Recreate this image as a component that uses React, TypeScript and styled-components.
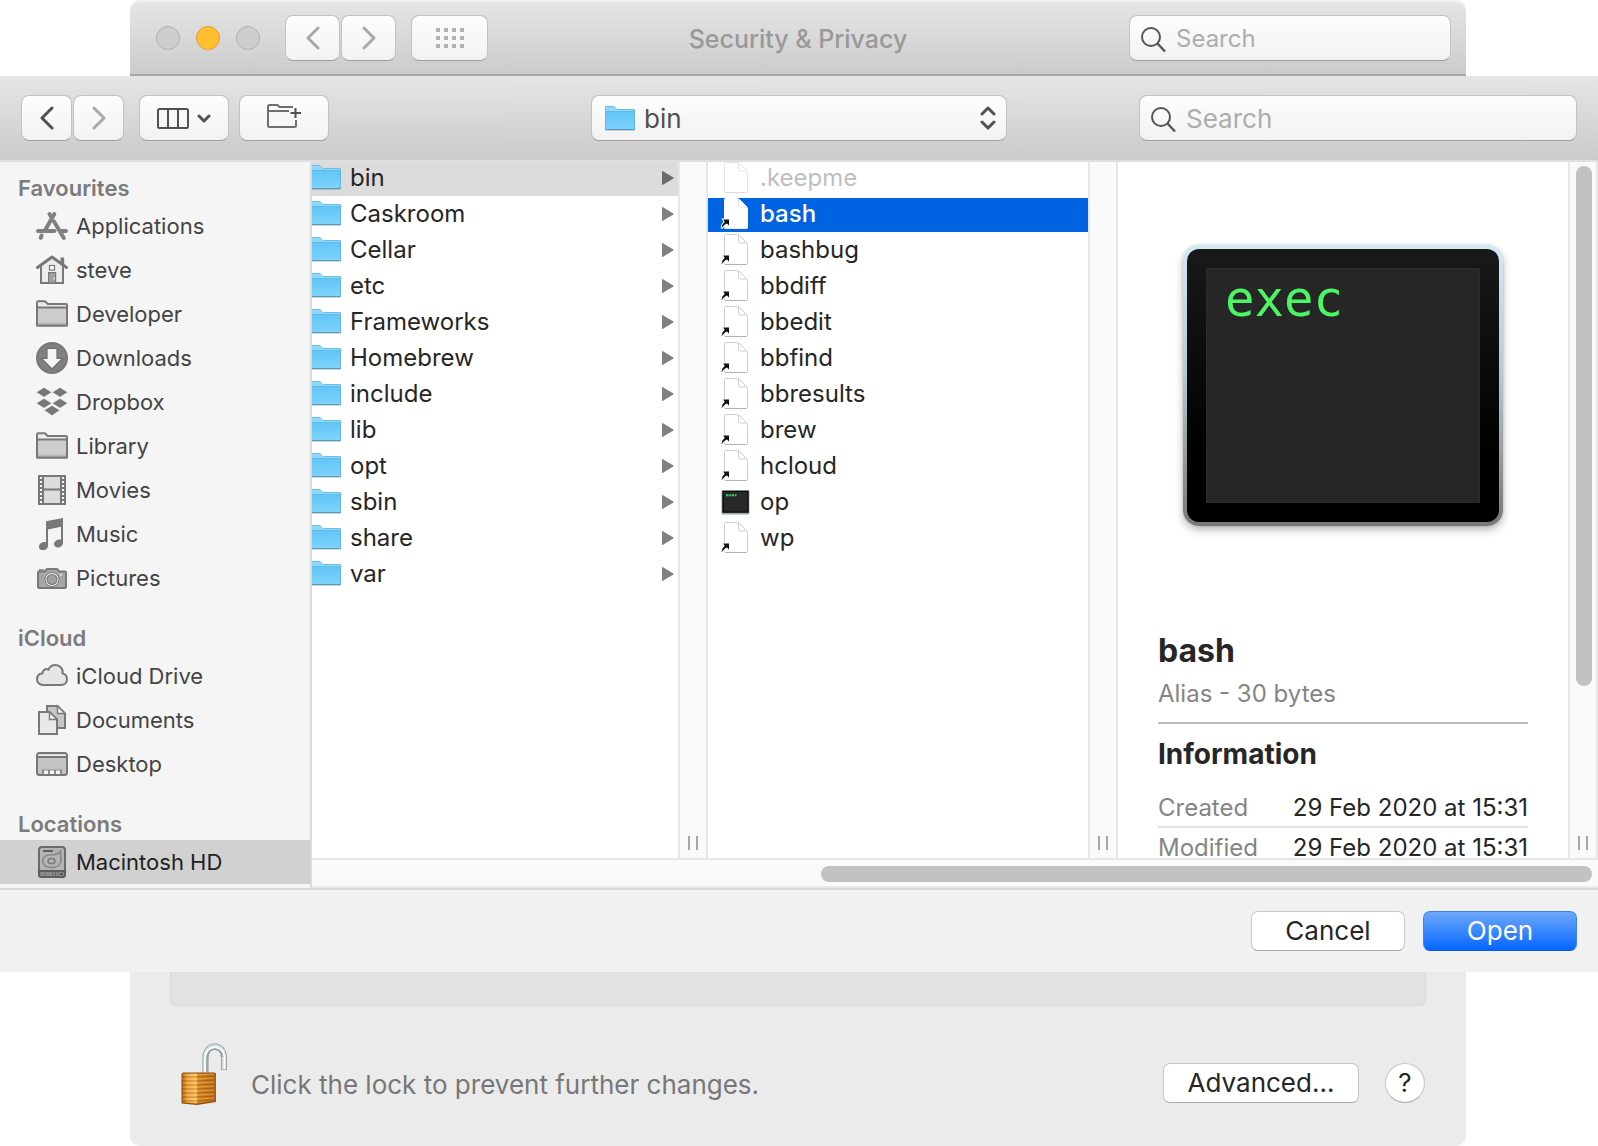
import React from "react";
import styled, { createGlobalStyle, css } from "styled-components";

const GlobalStyle = createGlobalStyle`
  *, *::before, *::after { box-sizing: border-box; }
  body {
    margin: 0;
    background: #fff;
    color: #262626;
    font-family: Inter, "Liberation Sans", sans-serif;
    font-size: 24px;
  }
  button, input, select { font: inherit; color: inherit; margin: 0; }
  button { cursor: default; }
  ul, dl, dd, h1, h2, h3, p { margin: 0; padding: 0; }
  ul { list-style: none; }
  svg { display: block; flex: none; }
`;

/* ---------- page and windows ---------- */

const Page = styled.main`
  display: flex;
  flex-direction: column;
  min-height: 100vh;
`;

const TitleBar = styled.header`
  display: grid;
  grid-template-columns: 1fr auto 1fr;
  align-items: center;
  height: 76px;
  margin: 0 132px 0 130px;
  padding: 2px 15px 0;
  border-bottom: 2px solid #a6a6a6;
  border-radius: 10px 10px 0 0;
  background: linear-gradient(#e6e6e6, #cbcbcb);
  box-shadow: inset 0 2px 0 #f1f1f1;
`;

const WindowTitle = styled.h1`
  padding-top: 2px;
  font-size: 25px;
  line-height: 32px;
  font-weight: 500;
  color: #999;
`;

const Sheet = styled.section`
  display: flex;
  flex-direction: column;
`;

const Toolbar = styled.div`
  display: grid;
  grid-template-columns: 1fr 416px 1fr;
  align-items: center;
  height: 84px;
  padding: 0 21px;
  background: linear-gradient(#e5e5e5, #cbcbcb);
`;

const WindowBody = styled.section`
  display: flex;
  flex-direction: column;
  flex: 1;
  margin: 0 132px 0 130px;
  border-radius: 0 0 10px 10px;
  background: #ebebeb;
`;

const GroupBox = styled.div`
  height: 34px;
  margin: 0 40px;
  border: 1px solid #dadada;
  border-top: 0;
  border-radius: 0 0 6px 6px;
  background: #e2e2e2;
`;

const LockRow = styled.div`
  display: flex;
  align-items: center;
  flex: 1;
  padding: 14px 41px 0 51px;
`;

const LockToggle = styled.button`
  align-self: flex-start;
  margin: 23px 22px 0 0;
  padding: 0;
  border: 0;
  background: none;
`;

const LockNote = styled.p`
  flex: 1;
  padding-top: 4px;
  font-size: 26px;
  line-height: 32px;
  color: #777;
`;

/* ---------- controls ---------- */

const Cluster = styled.div<{ $gap: number }>`
  display: flex;
  align-items: center;
  gap: ${(p) => p.$gap}px;
`;

const raised = css`
  height: 46px;
  border: 1px solid #c2c2c2;
  border-bottom-color: #9f9f9f;
  border-radius: 8px;
  background: linear-gradient(#fdfdfd, #f2f2f2);
`;

const ToolButton = styled.button<{ $width: number }>`
  ${raised}
  display: flex;
  align-items: center;
  justify-content: center;
  gap: 8px;
  width: ${(p) => p.$width}px;
  padding: 0;
`;

const Lights = styled.div`
  display: flex;
  gap: 16px;
  margin: 0 10px 0 11px;
`;

const Light = styled.button<{ $on?: boolean }>`
  width: 24px;
  height: 24px;
  padding: 0;
  border: 1px solid ${(p) => (p.$on ? "#e3993a" : "#b2b2b2")};
  border-radius: 50%;
  background: ${(p) => (p.$on ? "#ffbf2f" : "#cdcdcd")};
`;

const SearchBox = styled.label<{ $width: number }>`
  position: relative;
  justify-self: end;
  width: ${(p) => p.$width}px;
  max-width: 100%;

  svg {
    position: absolute;
    left: 12px;
    top: 12px;
  }
`;

const SearchInput = styled.input<{ $size: number }>`
  ${raised}
  display: block;
  width: 100%;
  padding: 0 12px 0 46px;
  font-size: ${(p) => p.$size}px;

  &::placeholder {
    color: #adadad;
    opacity: 1;
  }
`;

const PathPicker = styled.label`
  position: relative;
  display: block;

  svg {
    position: absolute;
    top: 11px;
    pointer-events: none;
  }
  svg:first-child { left: 14px; }
  svg:last-child { right: 11px; }
`;

const PathSelect = styled.select`
  ${raised}
  appearance: none;
  display: block;
  width: 100%;
  padding: 0 40px 0 52px;
  font-size: 26px;
  color: #505050;
`;

const PushButton = styled.button<{ $primary?: boolean; $width: number }>`
  width: ${(p) => p.$width}px;
  height: 40px;
  padding: 0;
  border: 1px solid ${(p) => (p.$primary ? "#3b84f2" : "#c6c6c6")};
  border-bottom-color: ${(p) => (p.$primary ? "#0a5be0" : "#ababab")};
  border-radius: 7px;
  background: ${(p) => (p.$primary ? "linear-gradient(#6fa9fb, #0566ff)" : "#fff")};
  color: ${(p) => (p.$primary ? "#fff" : "#262626")};
  font-size: 26px;
  line-height: 36px;
`;

const HelpButton = styled.button`
  width: 40px;
  height: 40px;
  margin-left: 26px;
  padding: 0;
  border: 1px solid #c6c6c6;
  border-bottom-color: #ababab;
  border-radius: 50%;
  background: #fff;
  font-size: 26px;
  line-height: 36px;
`;

/* ---------- browser ---------- */

const Browser = styled.div`
  display: flex;
  border-top: 2px solid #dfdfdf;
  border-bottom: 2px solid #d8d8d8;
`;

const Sidebar = styled.nav`
  width: 312px;
  flex: none;
  padding: 14px 0 4px;
  border-right: 2px solid #dbdbdb;
  background: #f5f5f5;
`;

const SideGroup = styled.section`
  & + & { margin-top: 26px; }
`;

const SideHeading = styled.h2`
  padding-left: 18px;
  font-size: 22px;
  line-height: 24px;
  height: 28px;
  font-weight: 600;
  color: #7b7b7b;
`;

const SideItem = styled.button<{ $selected?: boolean }>`
  display: flex;
  align-items: center;
  gap: 8px;
  width: 100%;
  height: 44px;
  padding: 0 0 0 36px;
  border: 0;
  background: ${(p) => (p.$selected ? "#d1d1d1" : "transparent")};
  color: ${(p) => (p.$selected ? "#222" : "#444")};
  font-size: 22px;
`;

const BrowserMain = styled.div`
  display: flex;
  flex-direction: column;
  flex: 1;
  min-width: 0;
`;

const Columns = styled.div`
  display: flex;
  flex: 1 1 0;
  min-height: 0;
  overflow: hidden;
  contain: size;
`;

const FileList = styled.ul<{ $grow: number }>`
  display: flex;
  flex-direction: column;
  gap: 2px;
  flex: ${(p) => p.$grow} 1 0;
  min-width: 0;
  overflow: hidden;
`;

const FileRow = styled.button<{ $tone?: "parent" | "active"; $dim?: boolean; $inset: number }>`
  display: flex;
  align-items: center;
  gap: 9px;
  width: 100%;
  height: 34px;
  padding: 0 4px 3px ${(p) => p.$inset}px;
  border: 0;
  text-align: left;
  background: ${(p) => (p.$tone === "active" ? "#0063e1" : p.$tone === "parent" ? "#dcdcdc" : "transparent")};
  color: ${(p) => (p.$tone === "active" ? "#fff" : p.$dim ? "#bfbfbf" : "#262626")};
  font-weight: ${(p) => (p.$tone === "active" ? 500 : 400)};
`;

const FolderSlot = styled.span`
  width: 29px;
  overflow: hidden;
  display: flex;
  justify-content: flex-end;
`;

const FileSlot = styled.span`
  width: 31px;
`;

const FileName = styled.span`
  flex: 1;
`;

const Gutter = styled.div`
  display: flex;
  flex-direction: column;
  align-items: center;
  width: 30px;
  flex: none;
  padding: 4px 0 8px;
  border: 2px solid #e6e6e6;
  border-width: 0 2px;
  background: #fafafa;
`;

const Grip = styled.span`
  width: 10px;
  height: 14px;
  margin-top: auto;
  border: 2px solid #a6a6a6;
  border-width: 0 2px;
`;

const VerticalThumb = styled.span`
  width: 16px;
  height: 76%;
  border-radius: 8px;
  background: #c2c2c2;
  margin-left: 2px;
`;

const HorizontalTrack = styled.div`
  display: flex;
  justify-content: flex-end;
  align-items: center;
  height: 30px;
  padding: 2px 6px 0 0;
  border-top: 2px solid #e6e6e6;
  border-bottom: 2px solid #e9e9e9;
  background: #fafafa;
`;

const HorizontalThumb = styled.span`
  width: calc(60% + 3px);
  height: 16px;
  border-radius: 8px;
  background: #c2c2c2;
`;

const Footer = styled.footer`
  display: flex;
  justify-content: flex-end;
  gap: 18px;
  padding: 21px;
  background: #f1f1f1;
`;

/* ---------- preview ---------- */

const Preview = styled.article`
  flex: 370 1 80px;
  min-width: 0;
  padding: 83px 40px 0;
  overflow: hidden;
`;

const ExecFrame = styled.div`
  width: 320px;
  height: 281px;
  margin: 0 auto 105px;
  padding: 4px;
  border-radius: 16px;
  background: linear-gradient(#d3e9f3, #b9c9d0 45%, #777);
  box-shadow: 0 0 2px rgba(0, 0, 0, 0.2), 0 4px 8px rgba(0, 0, 0, 0.28);
`;

const ExecBezel = styled.div`
  height: 100%;
  padding: 19px;
  border-radius: 12px;
  background: linear-gradient(#191919, #000 75%);
`;

const ExecScreen = styled.div`
  height: 100%;
  padding: 3px 18px;
  border: 1px solid #2c2c2c;
  background: #262626;
  color: #4cf566;
  font-family: "DejaVu Sans Mono", monospace;
  font-size: 49px;
  line-height: 56px;
`;

const PreviewTitle = styled.h2`
  font-size: 32px;
  line-height: 40px;
  font-weight: 700;
`;

const PreviewKind = styled.p`
  margin-top: 7px;
  padding-bottom: 12px;
  line-height: 32px;
  border-bottom: 2px solid #bcbcbc;
  color: #858585;
`;

const PreviewHeading = styled.h3`
  margin: 12px 0 16px;
  font-size: 28px;
  line-height: 36px;
  font-weight: 700;
`;

const Fact = styled.div`
  display: flex;
  justify-content: space-between;
  padding-top: 2px;
  line-height: 36px;
  border-bottom: 2px solid #e2e2e2;
  white-space: nowrap;

  dt { color: #858585; }
`;

/* ---------- icons ---------- */

const INK = "#787878";

const Chevron = ({ flip, color }: { flip?: boolean; color: string }) => (
  <svg width="14" height="24" viewBox="0 0 14 24" fill="none" stroke={color} strokeWidth="3" strokeLinecap="round" strokeLinejoin="round">
    <path d={flip ? "M2 2L12 12L2 22" : "M12 2L2 12L12 22"} />
  </svg>
);

const GridIcon = () => (
  <svg width="28" height="20" viewBox="0 0 28 20" fill="#b1b1b1">
    {[0, 8, 16].map((y) => [0, 8, 16, 24].map((x) => <rect key={`${x}-${y}`} x={x} y={y} width="4" height="4" />))}
  </svg>
);

const Magnifier = () => (
  <svg width="26" height="26" viewBox="0 0 26 26" fill="none" stroke="#555" strokeWidth="2">
    <circle cx="10" cy="10" r="9" />
    <path d="M16.5 16.5L24 24.5" strokeWidth="2.4" />
  </svg>
);

const ColumnsIcon = () => (
  <svg width="32" height="21" viewBox="0 0 32 21" fill="none" stroke="#505050" strokeWidth="2">
    <rect x="1" y="1" width="30" height="19" rx="1.5" />
    <path d="M11 1V20M21 1V20" />
  </svg>
);

const DownChevron = () => (
  <svg width="14" height="9" viewBox="0 0 14 9" fill="none" stroke="#505050" strokeWidth="3" strokeLinecap="round" strokeLinejoin="round">
    <path d="M2 2L7 7L12 2" />
  </svg>
);

const NewFolderIcon = () => (
  <svg width="34" height="28" viewBox="0 0 34 28" fill="none" stroke="#6f6f6f" strokeWidth="2">
    <path d="M26 3H12.5L10.5 1H2.5Q1 1 1 2.5V21.5Q1 23 2.5 23H27.5Q29 23 29 21.5V16M1 7H22" />
    <path d="M28.5 4V14M23.5 9H34" stroke="#505050" />
  </svg>
);

const UpDownIcon = () => (
  <svg width="16" height="24" viewBox="0 0 16 24" fill="none" stroke="#505050" strokeWidth="3" strokeLinecap="round" strokeLinejoin="round">
    <path d="M2 8L8 2L14 8M2 16L8 22L14 16" />
  </svg>
);

const BlueFolder = () => (
  <svg width="30" height="25" viewBox="0 0 30 25">
    <defs>
      <linearGradient id="folderFace" x1="0" y1="0" x2="0" y2="1">
        <stop offset="0" stopColor="#62c6f8" />
        <stop offset="1" stopColor="#7dd3fb" />
      </linearGradient>
    </defs>
    <path d="M0.5 24.5H29.5" stroke="#000" strokeOpacity=".16" />
    <path d="M.5 23V1Q.5 .5 1 .5H8.5Q9.5 .5 10 1.5L11 2.8Q11.5 3.5 12.5 3.5H29Q29.5 3.5 29.5 4V23Z" fill="#8fd9fd" stroke="#69bde6" />
    <path d="M.5 5.5H29.5V23.5H.5Z" fill="url(#folderFace)" stroke="#5fb4de" strokeWidth=".8" />
    <path d="M.5 23.5H29.5" stroke="#4f9cc4" />
  </svg>
);

const DocIcon = ({ alias, dim, lit }: { alias?: boolean; dim?: boolean; lit?: boolean }) => {
  const edge = dim ? "#e4e4e4" : lit ? "#fff" : "#cdcdcd";
  return (
    <svg width="28" height="31" viewBox="0 0 28 31">
      <path
        d="M4.5 1.5Q4.5 .5 5.5 .5H16Q18.5 .5 20 2L26 8Q27.5 9.5 27.5 12V29.5Q27.5 30.5 26.5 30.5H5.5Q4.5 30.5 4.5 29.5Z"
        fill="#fff"
        stroke={edge}
      />
      <path d="M18.5 1V7.5Q18.5 9 20 9H26.5" fill="none" stroke={lit ? "#e4e4e4" : edge} />
      <path d="M5 30.5H27" stroke={dim ? "#dcdcdc" : lit ? "#e8eefa" : "#b4b4b4"} />
      {alias && (
        <path
          d="M1.6 30.4C1.8 27.4 2.8 25.4 4.8 24L3.2 21.4H9V27.4L7 25.6C4.8 26.6 3 28 1.6 30.4Z"
          fill="#111"
          stroke="#fff"
          strokeWidth="2"
          paintOrder="stroke"
        />
      )}
    </svg>
  );
};

const ExecSmall = () => (
  <svg width="30" height="28" viewBox="0 0 30 28">
    <rect x="1.5" y="2" width="28" height="24.5" rx="1.5" fill="#9ba9af" />
    <rect x="2.3" y="2.8" width="26.4" height="22" fill="#0b0b0b" />
    <rect x="3.8" y="4" width="23.4" height="19.5" fill="#282828" />
    <path d="M6 7.3H8.5M9.2 7.3H11.3M12 7.3H14M14.7 7.3H16.5" stroke="#3fc856" strokeWidth="2" />
  </svg>
);

const Disclosure = ({ dark }: { dark?: boolean }) => (
  <svg width="12" height="14" viewBox="0 0 12 14" fill={dark ? "#6b6b6b" : "#808080"}>
    <path d="M0 .8Q0 -.3 1 .3L11.4 6.4Q12.2 7 11.4 7.6L1 13.7Q0 14.3 0 13.2Z" />
  </svg>
);

const Glyph = ({ children }: { children: React.ReactNode }) => (
  <svg width="32" height="32" viewBox="0 0 32 32" fill="none" stroke={INK} strokeWidth="2">
    {children}
  </svg>
);

const AppsIcon = () => (
  <Glyph>
    <g strokeWidth="4" strokeLinecap="round" stroke="#808080">
      <path d="M18.3 4L9.5 19.5M5.6 25.5L4.8 27.8M13.5 4L15.2 7M18 11.5L27.8 28M2 21H18.5M25.5 21H30" />
    </g>
  </Glyph>
);

const HomeIcon = () => (
  <Glyph>
    <path d="M25.5 10V4.5H27.2V12" fill="#a0a0a0" />
    <path d="M5 12V29H27V12L16 4Z" fill="#ececec" stroke="none" />
    <path d="M5 11V29H27V11" />
    <path d="M1.5 13.5L16 3L30.5 13.5" strokeWidth="3" strokeLinecap="round" strokeLinejoin="round" />
    <rect x="13.5" y="11.5" width="5" height="4.5" fill="#fff" strokeWidth="1.2" />
    <rect x="12.6" y="18.6" width="7" height="10.4" fill="#a3a3a3" strokeWidth="1.2" />
    <path d="M18.3 23.5V25.5" stroke="#fff" strokeWidth="1" />
  </Glyph>
);

const SideFolderIcon = () => (
  <Glyph>
    <path d="M1 27V4.5Q1 3.2 2.3 3.2H9L11.8 6H30Q31 6 31 7V27Q31 27.6 30.3 27.6H1.7Q1 27.6 1 27Z" fill="#ebebeb" />
    <path d="M2 10H30V26.6H2Z" fill="#cdcdcd" stroke="none" />
    <path d="M2 25.5H30" stroke="#bbb" />
    <path d="M1 27V10.5Q1 9.5 2 9.5H30Q31 9.5 31 10.5V27Q31 27.6 30.3 27.6H1.7Q1 27.6 1 27Z" />
  </Glyph>
);

const DownloadsIcon = () => (
  <Glyph>
    <circle cx="16" cy="16" r="15" fill="#808080" />
    <path d="M11 6.5H21V16.5H26.5L16 27L5.5 16.5H11Z" fill="#f5f5f5" strokeWidth="1.2" stroke="#6c6c6c" />
  </Glyph>
);

const DropboxIcon = () => (
  <Glyph>
    <path
      d="M8 1.3L16 6.3L8 11.3L0 6.3ZM24 1.3L32 6.3L24 11.3L16 6.3ZM8 12.3L16 17.3L8 22.3L0 17.3ZM24 12.3L32 17.3L24 22.3L16 17.3ZM16 19.3L24 24.3L16 29.8L8 24.3Z"
      fill={INK}
      stroke="#f5f5f5"
      strokeWidth=".8"
    />
  </Glyph>
);

const MoviesIcon = () => (
  <Glyph>
    <rect x="2" y="1" width="28" height="30" fill={INK} stroke="none" />
    <path d="M8 3H24V14.5H8ZM8 16.5H24V29H8Z" fill="#dcdcdc" stroke="none" />
    <path d="M5 3V30M27 3V30" stroke="#f5f5f5" strokeWidth="2" strokeDasharray="2 2" />
  </Glyph>
);

const MusicIcon = () => (
  <Glyph>
    <path
      d="M10 3.2L27 0V24.5C27 30.5 18.2 31 18 26.3C18 22.5 22 21 25 21.5V8.8L12 11.4V27.5C12 33.5 3 33.5 3 29C3 25 7 23.6 10 24.2Z"
      fill={INK}
      stroke="none"
    />
  </Glyph>
);

const PicturesIcon = () => (
  <Glyph>
    <path d="M2 10.5Q2 9.5 3 9.5H8.5L11 7H21L23.5 9.5H29Q30 9.5 30 10.5V25Q30 26 29 26H3Q2 26 2 25Z" fill="#a6a6a6" />
    <path d="M3.5 9V7.8H7V9" strokeWidth="1.2" />
    <circle cx="16" cy="17.5" r="7" fill="#f5f5f5" strokeWidth="1" />
    <circle cx="16" cy="17.5" r="5" fill="#a0a0a0" strokeWidth="1.2" />
    <circle cx="25" cy="12.8" r="1" fill="#f5f5f5" stroke="none" />
  </Glyph>
);

const CloudIcon = () => (
  <Glyph>
    <path d="M7 25H25C29 25 31 22.2 31 19.2C31 16.2 29 14 26.6 13.4C27.5 8.5 23.5 5 19.5 5C16.2 5 13.6 6.8 12.5 9.6C9.6 8.2 6.6 10 6.5 13.2C3 13.8 1 16.3 1 19.2C1 22.4 3.5 25 7 25Z" fill="#e6e6e6" />
  </Glyph>
);

const DocumentsIcon = () => (
  <Glyph>
    <path d="M11 2H21.5L29 9.5V24H11Z" fill="#c6c6c6" />
    <path d="M21.5 2V9.5H29Z" fill="#f5f5f5" strokeWidth="1.4" />
    <path d="M3 8H13.5L21 15.5V30H3Z" fill="#e8e8e8" />
    <path d="M13.5 8V15.5H21Z" fill="#f5f5f5" strokeWidth="1.4" />
  </Glyph>
);

const DesktopIcon = () => (
  <Glyph>
    <rect x="1" y="5" width="30" height="22" rx="2.5" fill="#c4c4c4" />
    <path d="M2 6.5H30V8H2Z" fill="#f0f0f0" stroke="none" />
    <path d="M1 9H31" />
    <rect x="6" y="21.5" width="20" height="4.5" fill="#8c8c8c" stroke="none" />
    <path d="M8 22.5H12V26H8ZM14 22.5H18V26H14ZM20 22.5H24V26H20Z" fill="#f5f5f5" stroke="none" />
  </Glyph>
);

const DiskIcon = () => (
  <Glyph>
    <rect x="3" y="1" width="26" height="30" rx="3" fill="#b4b4b4" stroke="#6a6a6a" />
    <path d="M3 25H29V28.5Q29 31 26.5 31H5.5Q3 31 3 28.5Z" fill="#8a8a8a" stroke="#5e5e5e" />
    <path d="M7 5H17" stroke="#5e5e5e" />
    <path d="M24.5 5.5L25 15C24.5 19.5 20.5 21.5 15.5 21.5C10.5 21.5 6.5 19 6.5 15C6.5 11 10.5 8.8 15 8.8C20 8.8 23 8 24.5 5.5Z" stroke="#858585" strokeWidth="1.5" />
    <ellipse cx="15.5" cy="15" rx="3.5" ry="2.6" stroke="#7c7c7c" strokeWidth="1.5" />
    <path d="M8 28H10M17 26V30M19.5 26V30M22 26V30" stroke="#6a6a6a" strokeWidth="1" />
    <circle cx="25.5" cy="28" r="1" fill="#222" stroke="none" />
  </Glyph>
);

const PadlockIcon = () => (
  <svg width="48" height="63" viewBox="0 0 48 63">
    <defs>
      <linearGradient id="brassLeft" x1="0" x2="1" y1="0" y2="0">
        <stop offset="0" stopColor="#a85a10" />
        <stop offset=".35" stopColor="#f0a43a" />
        <stop offset="1" stopColor="#ffc869" />
      </linearGradient>
      <linearGradient id="brassRight" x1="0" x2="1" y1="0" y2="0">
        <stop offset="0" stopColor="#d98a22" />
        <stop offset="1" stopColor="#b76a12" />
      </linearGradient>
    </defs>
    <g fill="none">
      <path d="M24.5 30V15C24.5 -.5 43 -.5 43 15V27" stroke="#8b959c" strokeWidth="6" />
      <path d="M24.5 30V15C24.5 -.5 43 -.5 43 15V26.5" stroke="#d9e1e6" strokeWidth="4.4" />
      <path d="M26 29V15.5C26 3.5 41 3.500 41.500 14" stroke="#8f9ca4" strokeWidth="1.6" />
      <path d="M24 29V15C24 1 43.3 .5 43.500 15V26" stroke="#fff" strokeWidth="1.4" />
    </g>
    <path d="M.5 31L2 29.5H33.5L35 30.5V59L16 62L.5 60.5Z" fill="#8f4d0b" />
    <path d="M1 30.5H16V60.5L1 59.5Z" fill="url(#brassLeft)" />
    <path d="M16 30.5H34.5V58L16 60.5Z" fill="url(#brassRight)" />
    <g stroke="#8f4f0c" strokeOpacity=".5" strokeWidth="1.2">
      {[34, 38, 42, 46, 50, 54, 58].map((y) => (
        <path key={y} d={`M1 ${y}H16L34.5 ${y - 1}`} fill="none" />
      ))}
    </g>
    <g stroke="#ffdc94" strokeOpacity=".35" strokeWidth="1">
      {[32, 36, 40, 44, 48, 52, 56].map((y) => (
        <path key={y} d={`M2 ${y}H16L33 ${y - 1}`} fill="none" />
      ))}
    </g>
  </svg>
);

/* ---------- data ---------- */

type SideEntry = { name: string; icon: React.ReactNode; selected?: boolean };

const sidebar: { title: string; items: SideEntry[] }[] = [
  {
    title: "Favourites",
    items: [
      { name: "Applications", icon: <AppsIcon /> },
      { name: "steve", icon: <HomeIcon /> },
      { name: "Developer", icon: <SideFolderIcon /> },
      { name: "Downloads", icon: <DownloadsIcon /> },
      { name: "Dropbox", icon: <DropboxIcon /> },
      { name: "Library", icon: <SideFolderIcon /> },
      { name: "Movies", icon: <MoviesIcon /> },
      { name: "Music", icon: <MusicIcon /> },
      { name: "Pictures", icon: <PicturesIcon /> },
    ],
  },
  {
    title: "iCloud",
    items: [
      { name: "iCloud Drive", icon: <CloudIcon /> },
      { name: "Documents", icon: <DocumentsIcon /> },
      { name: "Desktop", icon: <DesktopIcon /> },
    ],
  },
  { title: "Locations", items: [{ name: "Macintosh HD", icon: <DiskIcon />, selected: true }] },
];

const folders = ["bin", "Caskroom", "Cellar", "etc", "Frameworks", "Homebrew", "include", "lib", "opt", "sbin", "share", "var"];

const files: { name: string; kind: "plain" | "alias" | "exec" }[] = [
  { name: ".keepme", kind: "plain" },
  { name: "bash", kind: "alias" },
  { name: "bashbug", kind: "alias" },
  { name: "bbdiff", kind: "alias" },
  { name: "bbedit", kind: "alias" },
  { name: "bbfind", kind: "alias" },
  { name: "bbresults", kind: "alias" },
  { name: "brew", kind: "alias" },
  { name: "hcloud", kind: "alias" },
  { name: "op", kind: "exec" },
  { name: "wp", kind: "alias" },
];

const facts = [
  ["Created", "29 Feb 2020 at 15:31"],
  ["Modified", "29 Feb 2020 at 15:31"],
];

const openFolder = "bin";
const chosenFile = "bash";

/* ---------- app ---------- */

export default function App() {
  return (
    <>
      <GlobalStyle />
      <Page>
        <TitleBar>
          <Cluster $gap={15}>
            <Lights>
              <Light aria-label="Close" />
              <Light aria-label="Minimise" $on />
              <Light aria-label="Zoom" />
            </Lights>
            <Cluster $gap={1}>
              <ToolButton $width={55} aria-label="Back"><Chevron color="#a9a9a9" /></ToolButton>
              <ToolButton $width={55} aria-label="Forward"><Chevron flip color="#a9a9a9" /></ToolButton>
            </Cluster>
            <ToolButton $width={77} aria-label="Show all"><GridIcon /></ToolButton>
          </Cluster>
          <WindowTitle>Security &amp; Privacy</WindowTitle>
          <SearchBox $width={322}>
            <SearchInput $size={24} type="search" placeholder="Search" aria-label="Search preferences" />
            <Magnifier />
          </SearchBox>
        </TitleBar>

        <Sheet>
          <Toolbar>
            <Cluster $gap={15}>
              <Cluster $gap={1}>
                <ToolButton $width={51} aria-label="Back"><Chevron color="#505050" /></ToolButton>
                <ToolButton $width={51} aria-label="Forward"><Chevron flip color="#a9a9a9" /></ToolButton>
              </Cluster>
              <Cluster $gap={10}>
                <ToolButton $width={90} aria-label="View as columns"><ColumnsIcon /><DownChevron /></ToolButton>
                <ToolButton $width={90} aria-label="New folder"><NewFolderIcon /></ToolButton>
              </Cluster>
            </Cluster>
            <PathPicker>
              <BlueFolder />
              <PathSelect aria-label="Folder" defaultValue={openFolder}>
                <option>{openFolder}</option>
              </PathSelect>
              <UpDownIcon />
            </PathPicker>
            <SearchBox $width={438}>
              <SearchInput $size={26} type="search" placeholder="Search" aria-label="Search files" />
              <Magnifier />
            </SearchBox>
          </Toolbar>

          <Browser>
            <Sidebar>
              {sidebar.map((group) => (
                <SideGroup key={group.title}>
                  <SideHeading>{group.title}</SideHeading>
                  <ul>
                    {group.items.map((item) => (
                      <li key={item.name}>
                        <SideItem $selected={item.selected}>
                          {item.icon}
                          <span>{item.name}</span>
                        </SideItem>
                      </li>
                    ))}
                  </ul>
                </SideGroup>
              ))}
            </Sidebar>

            <BrowserMain>
              <Columns>
                <FileList $grow={366}>
                  {folders.map((name) => (
                    <li key={name}>
                      <FileRow $inset={0} $tone={name === openFolder ? "parent" : undefined}>
                        <FolderSlot><BlueFolder /></FolderSlot>
                        <FileName>{name}</FileName>
                        <Disclosure dark={name === openFolder} />
                      </FileRow>
                    </li>
                  ))}
                </FileList>
                <Gutter><Grip /></Gutter>
                <FileList $grow={380}>
                  {files.map(({ name, kind }) => (
                    <li key={name}>
                      <FileRow $inset={12} $tone={name === chosenFile ? "active" : undefined} $dim={kind === "plain"}>
                        <FileSlot>
                          {kind === "exec" ? (
                            <ExecSmall />
                          ) : (
                            <DocIcon alias={kind === "alias"} dim={kind === "plain"} lit={name === chosenFile} />
                          )}
                        </FileSlot>
                        <FileName>{name}</FileName>
                      </FileRow>
                    </li>
                  ))}
                </FileList>
                <Gutter><Grip /></Gutter>
                <Preview>
                  <ExecFrame>
                    <ExecBezel>
                      <ExecScreen>exec</ExecScreen>
                    </ExecBezel>
                  </ExecFrame>
                  <PreviewTitle>bash</PreviewTitle>
                  <PreviewKind>Alias - 30 bytes</PreviewKind>
                  <PreviewHeading>Information</PreviewHeading>
                  <dl>
                    {facts.map(([label, value]) => (
                      <Fact key={label}>
                        <dt>{label}</dt>
                        <dd>{value}</dd>
                      </Fact>
                    ))}
                  </dl>
                </Preview>
                <Gutter>
                  <VerticalThumb />
                  <Grip />
                </Gutter>
              </Columns>
              <HorizontalTrack>
                <HorizontalThumb />
              </HorizontalTrack>
            </BrowserMain>
          </Browser>

          <Footer>
            <PushButton $width={154}>Cancel</PushButton>
            <PushButton $width={154} $primary>Open</PushButton>
          </Footer>
        </Sheet>

        <WindowBody>
          <GroupBox />
          <LockRow>
            <LockToggle aria-label="Lock"><PadlockIcon /></LockToggle>
            <LockNote>Click the lock to prevent further changes.</LockNote>
            <PushButton $width={196}>Advanced...</PushButton>
            <HelpButton aria-label="Help">?</HelpButton>
          </LockRow>
        </WindowBody>
      </Page>
    </>
  );
}
